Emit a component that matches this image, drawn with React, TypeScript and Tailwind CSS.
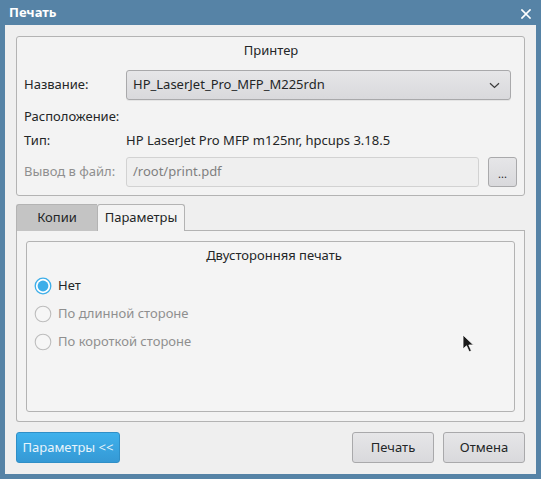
import React from "react";

const font = { fontFamily: '"Noto Sans", "Open Sans", sans-serif' };

function Radio({ checked, disabled, label }: { checked?: boolean; disabled?: boolean; label: string }) {
  return (
    <div className="flex items-center h-[28px]">
      <svg width="18" height="18" viewBox="0 0 18 18">
        {checked ? (
          <>
            <circle cx="9" cy="9" r="7.8" fill="#ffffff" stroke="#3daee9" strokeWidth="1.3" />
            <circle cx="9" cy="9" r="5.4" fill="#3daee9" />
          </>
        ) : (
          <circle cx="9" cy="9" r="7.8" fill="#f6f6f6" stroke={disabled ? "#bdbdbd" : "#9a9a9a"} strokeWidth="1.1" />
        )}
      </svg>
      <span className={`ml-[6px] text-[13px] ${disabled ? "text-[#8f8f8f]" : "text-[#232627]"}`}>{label}</span>
    </div>
  );
}

export default function App() {
  return (
    <div className="w-[541px] h-[479px] bg-[#5683a6] flex flex-col relative overflow-hidden" style={font}>
      {/* Title bar */}
      <div className="h-[25px] flex items-center justify-between pl-[9px] pr-[10px]">
        <span className="text-white font-bold text-[13px] leading-none">Печать</span>
        <svg width="10" height="10" viewBox="0 0 10 10" className="mt-[2px]">
          <path d="M1 1 L9 9 M9 1 L1 9" stroke="#ffffff" strokeWidth="1.7" strokeLinecap="square" />
        </svg>
      </div>

      {/* Content */}
      <div className="flex-1 mx-[5px] mb-[5px] bg-[#efefef] px-[11px] pt-[11px] pb-[11px] flex flex-col">
        {/* Printer group */}
        <div className="h-[160px] border border-[#b3b3b3] rounded-[3px] bg-[#f3f3f3] flex flex-col pl-[7px] pr-[6px]">
          <div className="h-[27px] flex items-center justify-center text-[13px] text-[#232627]">Принтер</div>
          <div className="mt-[6px] h-[30px] flex items-center">
            <span className="w-[102px] text-[13px] text-[#232627]">Название:</span>
            <div className="w-[385px] h-[30px] rounded-[3px] border border-[#a9a9ab] bg-gradient-to-b from-[#e6e6e8] to-[#d9d9dc] flex items-center pl-[6px] pr-[10px] justify-between shadow-[0_1px_0_rgba(0,0,0,0.06)]">
              <span className="text-[13px] text-[#232627]">HP_LaserJet_Pro_MFP_M225rdn</span>
              <svg width="11" height="7" viewBox="0 0 11 7">
                <path d="M1 1.2 L5.5 5.5 L10 1.2" fill="none" stroke="#3b3b3b" strokeWidth="1.2" />
              </svg>
            </div>
          </div>
          <div className="mt-[5px] h-[24px] flex items-center text-[13px] text-[#232627]">Расположение:</div>
          <div className="h-[24px] flex items-center text-[13px] text-[#232627]">
            <span className="w-[102px]">Тип:</span>
            <span>HP LaserJet Pro MFP m125nr, hpcups 3.18.5</span>
          </div>
          <div className="mt-[4px] h-[30px] flex items-center">
            <span className="w-[102px] text-[13px] text-[#8f8f8f]">Вывод в файл:</span>
            <div className="w-[353px] h-[30px] rounded-[3px] border border-[#d2d2d2] bg-[#efefef] flex items-center pl-[6px] text-[13px] text-[#7f7f7f]">
              /root/print.pdf
            </div>
            <div className="ml-[9px] w-[29px] h-[30px] rounded-[3px] border border-[#a9a9ab] bg-gradient-to-b from-[#e6e6e8] to-[#d9d9dc] flex items-center justify-center text-[11px] text-[#232627] leading-none pt-[2px]">
              ...
            </div>
          </div>
        </div>

        {/* Tabs */}
        <div className="mt-[8px] h-[27px] flex items-end">
          <div className="w-[81px] h-[27px] bg-[#c4c4c4] border-l border-t border-[#b3b3b3] rounded-tl-[3px] flex items-center justify-center text-[13px] text-[#232627]">
            Копии
          </div>
          <div className="w-[88px] h-[27px] bg-[#f3f3f3] border border-b-0 border-[#b3b3b3] rounded-t-[3px] flex items-center justify-center text-[13px] text-[#232627]">
            Параметры
          </div>
          <div className="flex-1 h-[27px] border-b border-[#b3b3b3]"></div>
        </div>

        {/* Tab panel */}
        <div className="h-[191px] border border-t-0 border-[#b3b3b3] rounded-b-[3px] bg-[#f3f3f3] px-[9px] pt-[10px] pb-[9px] flex">
          <div className="flex-1 border border-[#b3b3b3] rounded-[3px] bg-[#f4f4f4] flex flex-col pl-[7px]">
            <div className="h-[27px] flex items-center justify-center text-[13px] text-[#232627]">Двусторонняя печать</div>
            <div className="mt-[3px]">
              <Radio checked label="Нет" />
              <Radio disabled label="По длинной стороне" />
              <Radio disabled label="По короткой стороне" />
            </div>
          </div>
        </div>

        {/* Buttons */}
        <div className="mt-[10px] h-[31px] flex items-center">
          <div className="w-[104px] h-[31px] rounded-[3px] border border-[#2f8fc7] bg-gradient-to-b from-[#3fb1ec] to-[#3599d5] flex items-center justify-center text-[13px] text-[#e8f4fb]">
            Параметры &lt;&lt;
          </div>
          <div className="flex-1"></div>
          <div className="w-[82px] h-[31px] rounded-[3px] border border-[#a9a9ab] bg-gradient-to-b from-[#e6e6e8] to-[#d9d9dc] flex items-center justify-center text-[13px] text-[#232627]">
            Печать
          </div>
          <div className="ml-[9px] w-[82px] h-[31px] rounded-[3px] border border-[#a9a9ab] bg-gradient-to-b from-[#e6e6e8] to-[#d9d9dc] flex items-center justify-center text-[13px] text-[#232627]">
            Отмена
          </div>
        </div>
      </div>

      {/* Mouse cursor */}
      <svg width="14" height="20" viewBox="0 0 14 20" className="absolute left-[462px] top-[334px]">
        <path d="M1 1 L1 15 L4.5 11.8 L7.2 17.8 L9.4 16.8 L6.8 11 L11.5 11 Z" fill="#1a1a1a" stroke="#ffffff" strokeWidth="0.8" />
      </svg>
    </div>
  );
}
